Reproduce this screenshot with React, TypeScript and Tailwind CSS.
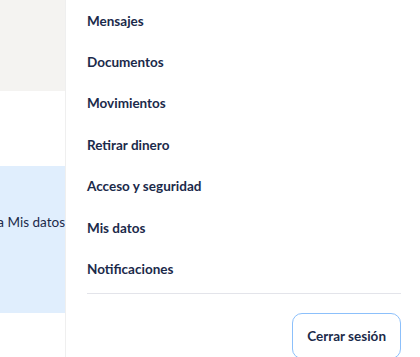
const items = [
  "Mensajes",
  "Documentos",
  "Movimientos",
  "Retirar dinero",
  "Acceso y seguridad",
  "Mis datos",
  "Notificaciones",
];

export default function App() {
  return (
    <div
      className="flex h-[357px] w-[420px] overflow-hidden bg-white text-[#1b2a4a]"
      style={{ fontFamily: "Lato, 'Noto Sans', sans-serif" }}
    >
      <div className="flex w-[65px] shrink-0 flex-col overflow-hidden">
        <div className="h-[91px] shrink-0 bg-[#f4f3f1]" />
        <div className="h-[75px] shrink-0 bg-white" />
        <div className="flex h-[147px] shrink-0 items-start justify-end bg-[#e0eefd] pt-[47px]">
          <span className="whitespace-nowrap text-[13.5px] leading-[18px] text-[#1b2a4a]">Ir a Mis datos</span>
        </div>
        <div className="flex-1 bg-white" />
      </div>
      <div className="flex flex-1 flex-col border-l border-[#efefef] pl-[21px] pr-[19px]">
        <ul className="shrink-0">
          {items.map((item) => (
            <li key={item} className="flex h-[41.4px] items-center text-[13.5px] font-bold">
              {item}
            </li>
          ))}
        </ul>
        <div className="mt-[3px] h-px shrink-0 bg-[#e3e4ea]" />
        <div className="mt-[19px] flex shrink-0 justify-end">
          <button className="h-[46px] rounded-[10px] border-[1.5px] border-[#8cc0fb] px-[14px] text-[13.5px] font-bold">
            Cerrar sesión
          </button>
        </div>
      </div>
    </div>
  );
}
